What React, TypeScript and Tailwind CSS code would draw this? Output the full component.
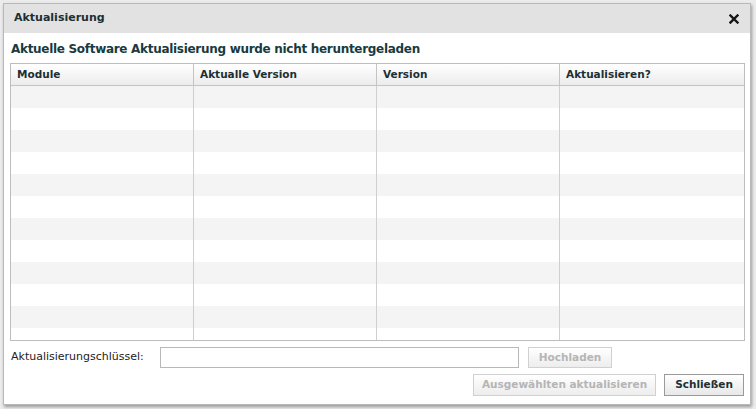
import React from 'react';

const cols = ['Module', 'Aktualle Version', 'Version', 'Aktualisieren?'];
const rows = Array.from({ length: 12 });

export default function App() {
  return (
    <div
      className="w-[756px] h-[409px] bg-[#ececec] pt-[3px] pl-[3px] overflow-hidden"
      style={{ fontFamily: '"DejaVu Sans", Verdana, sans-serif' }}
    >
      <div className="w-[748px] h-[402px] bg-white border border-[#b8b8b8] shadow-[1px_2px_3px_rgba(0,0,0,0.35)] flex flex-col">
        {/* title bar */}
        <div className="h-[29px] bg-[#e2e2e2] flex items-center justify-between pl-[10px] pr-[11px] shrink-0">
          <span className="text-[11px] font-bold text-[#1c2f33]">Aktualisierung</span>
          <svg width="10" height="10" viewBox="0 0 10 10" className="mt-[1px]">
            <path d="M1.5 1.5 L8.5 8.5 M8.5 1.5 L1.5 8.5" stroke="#151515" strokeWidth="2.4" strokeLinecap="square" />
          </svg>
        </div>

        <div className="flex flex-col px-[6px]">
          <h1 className="text-[12px] font-bold tracking-[-0.3px] text-[#183a40] pl-[1px] mt-[7px] h-[23px] leading-[18px]">
            Aktuelle Software Aktualisierung wurde nicht heruntergeladen
          </h1>

          {/* table */}
          <div className="w-[735px] h-[278px] border border-[#bdbdbd] overflow-hidden flex flex-col">
            <div className="grid grid-cols-[183px_183px_183px_1fr] h-[22px] shrink-0 border-b border-[#c4c4c4] bg-gradient-to-b from-white to-[#ececec]">
              {cols.map((c, i) => (
                <div
                  key={c}
                  className={`text-[10.5px] font-bold text-[#1c2f33] pl-[6px] flex items-center ${i < 3 ? 'border-r border-[#c4c4c4]' : ''}`}
                >
                  {c}
                </div>
              ))}
            </div>
            {rows.map((_, r) => (
              <div
                key={r}
                className={`grid grid-cols-[183px_183px_183px_1fr] h-[22px] shrink-0 ${r % 2 === 0 ? 'bg-[#f4f4f4]' : 'bg-white'}`}
              >
                <div className="border-r border-[#cfcfcf]" />
                <div className="border-r border-[#cfcfcf]" />
                <div className="border-r border-[#cfcfcf]" />
                <div />
              </div>
            ))}
          </div>

          {/* key row */}
          <div className="flex items-center mt-[6px] h-[21px]">
            <span className="text-[11px] text-[#222] pl-[1px] w-[150px]">Aktualisierungschlüssel:</span>
            <div className="w-[359px] h-[21px] border border-[#b8b8b8] bg-white" />
            <button className="ml-[9px] w-[84px] h-[21px] border border-[#d0d0d0] bg-gradient-to-b from-white to-[#ededed] text-[10.5px] font-bold text-[#b5b5b5]">
              Hochladen
            </button>
          </div>

          {/* buttons row */}
          <div className="flex justify-end gap-[8px] mt-[6px] pr-0">
            <button className="w-[183px] h-[22px] border border-[#d0d0d0] bg-gradient-to-b from-white to-[#ededed] text-[10.5px] font-bold text-[#b5b5b5]">
              Ausgewählten aktualisieren
            </button>
            <button className="w-[80px] h-[22px] border border-[#9a9a9a] bg-gradient-to-b from-white to-[#e8e8e8] text-[10.5px] font-bold text-[#1c2f33]">
              Schließen
            </button>
          </div>
        </div>
      </div>
    </div>
  );
}
